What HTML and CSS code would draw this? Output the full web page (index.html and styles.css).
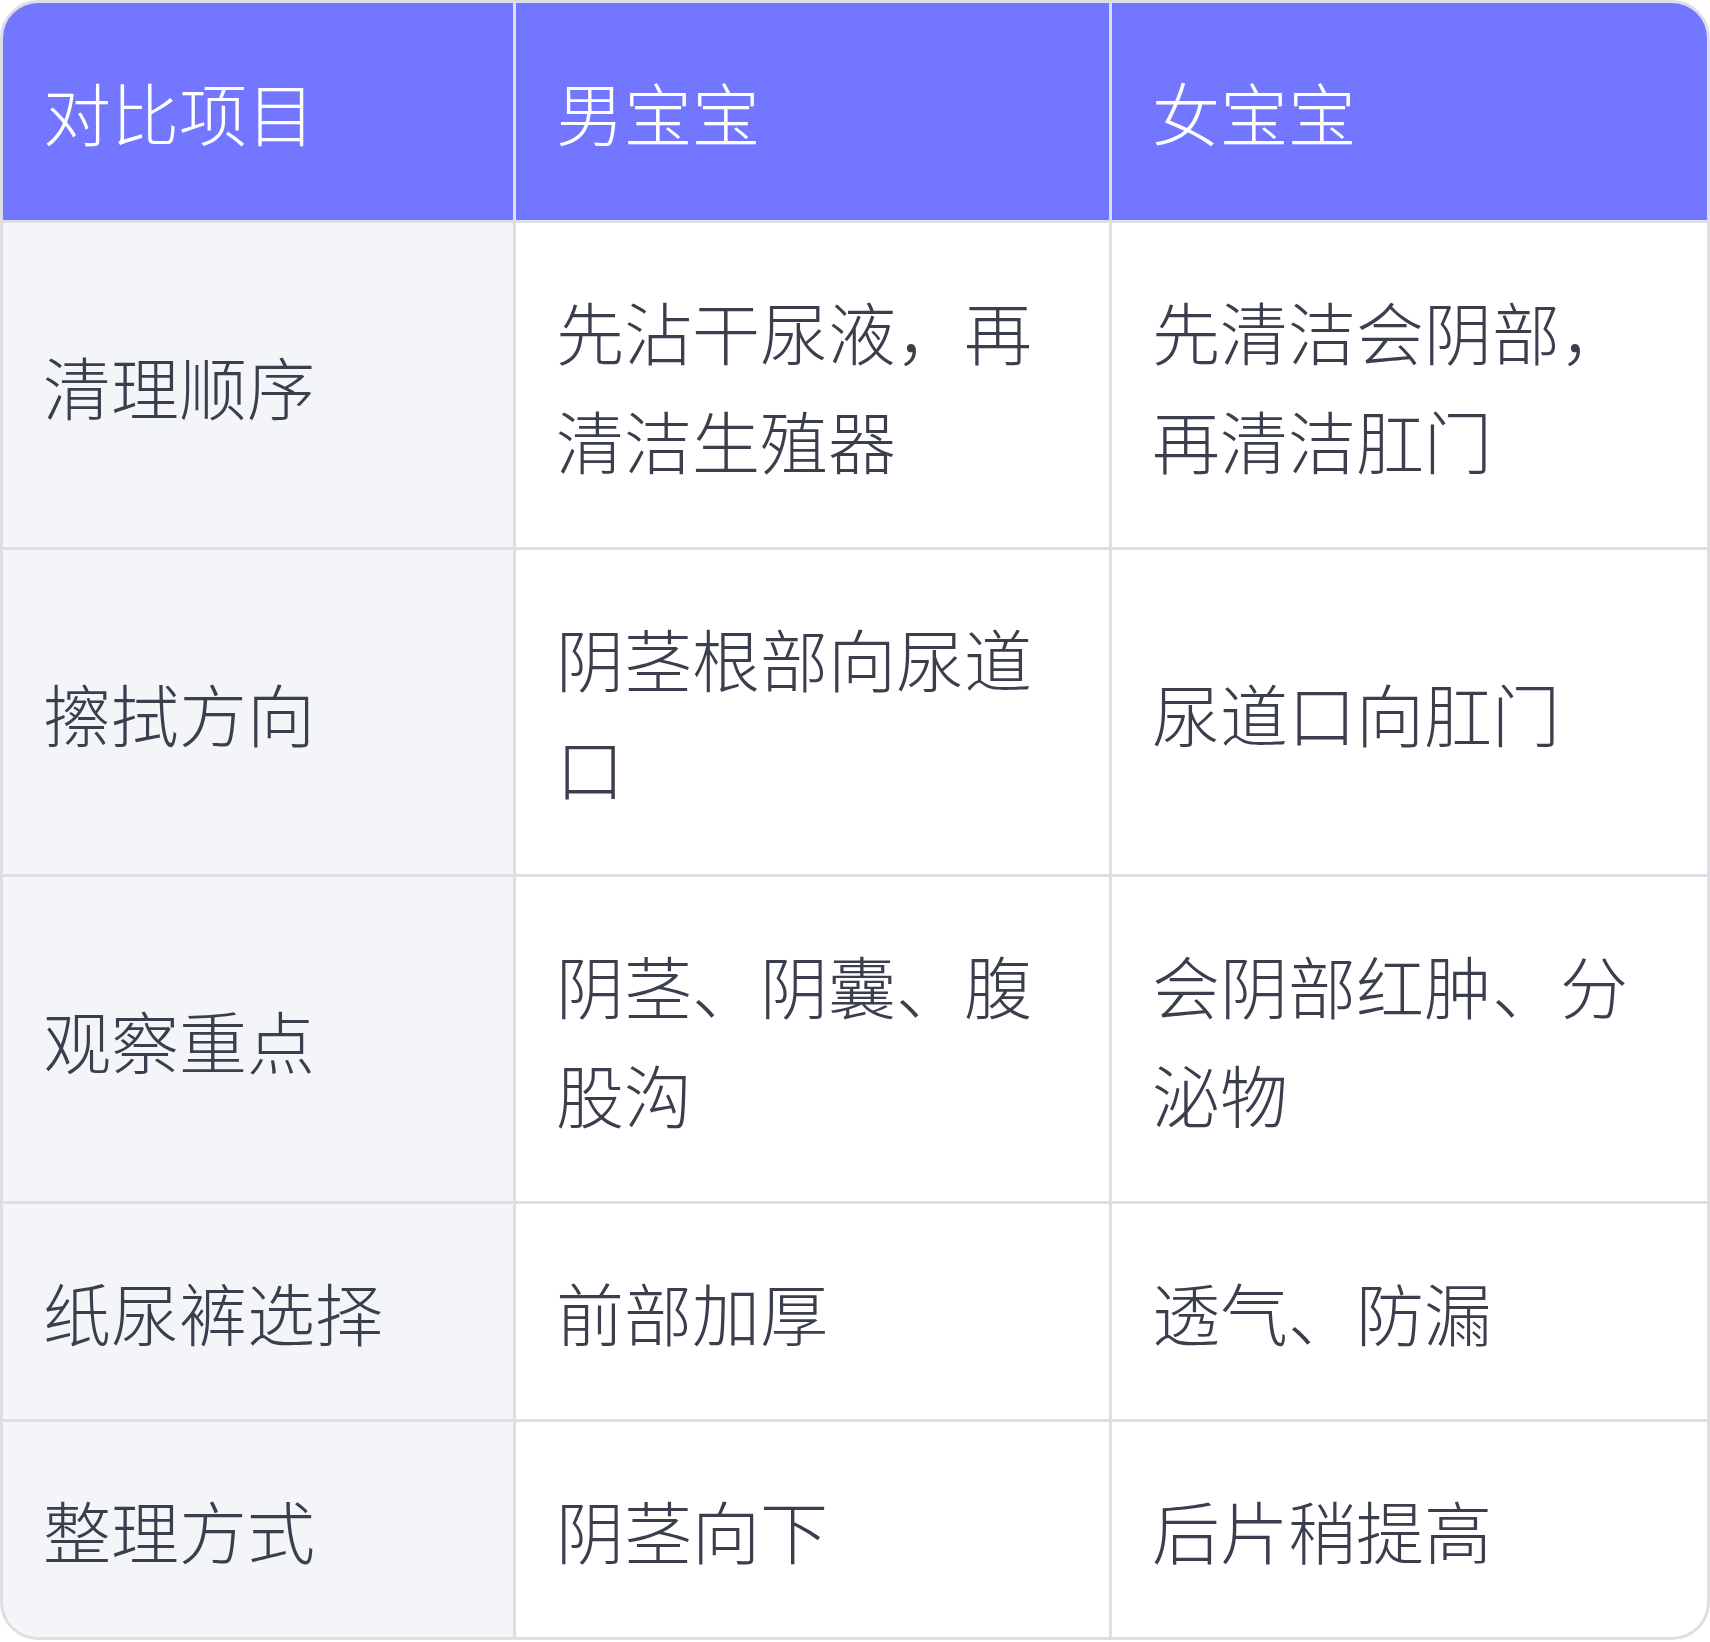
FILE: index.html
```html
<!DOCTYPE html>
<html lang="zh-CN">
<head>
<meta charset="utf-8">
<title>男宝宝与女宝宝护理对比</title>
<link rel="stylesheet" href="styles.css">
</head>
<body>
<div class="table">
  <div class="cell head">对比项目</div>
  <div class="cell head">男宝宝</div>
  <div class="cell head">女宝宝</div>

  <div class="cell label">清理顺序</div>
  <div class="cell">先沾干尿液，再清洁生殖器</div>
  <div class="cell">先清洁会阴部，再清洁肛门</div>

  <div class="cell label">擦拭方向</div>
  <div class="cell">阴茎根部向尿道口</div>
  <div class="cell">尿道口向肛门</div>

  <div class="cell label">观察重点</div>
  <div class="cell">阴茎、阴囊、腹股沟</div>
  <div class="cell">会阴部红肿、分泌物</div>

  <div class="cell label">纸尿裤选择</div>
  <div class="cell">前部加厚</div>
  <div class="cell">透气、防漏</div>

  <div class="cell label">整理方式</div>
  <div class="cell">阴茎向下</div>
  <div class="cell">后片稍提高</div>
</div>
</body>
</html>
```

FILE: styles.css
```css
html, body {
  margin: 0;
  padding: 0;
  background: #ffffff;
}

.table {
  width: 1710px;
  box-sizing: border-box;
  border: 3px solid #dedfe4;
  border-radius: 38px;
  overflow: hidden;
  display: grid;
  grid-template-columns: 510fr 593fr 595fr;
  gap: 3px;
  background: #dedfe4;
  font-family: "Noto Sans CJK SC", "Noto Sans", sans-serif;
  font-weight: 300;
  font-size: 68px;
  line-height: 109px;
  color: #3b3f4d;
}

.cell {
  background: #ffffff;
  padding: 53px 40px;
  display: flex;
  align-items: center;
}

.cell.head {
  background: #7377ff;
  color: #ffffff;
  padding-top: 54px;
  padding-bottom: 54px;
}

.cell.label {
  background: #f4f5f9;
}
```
